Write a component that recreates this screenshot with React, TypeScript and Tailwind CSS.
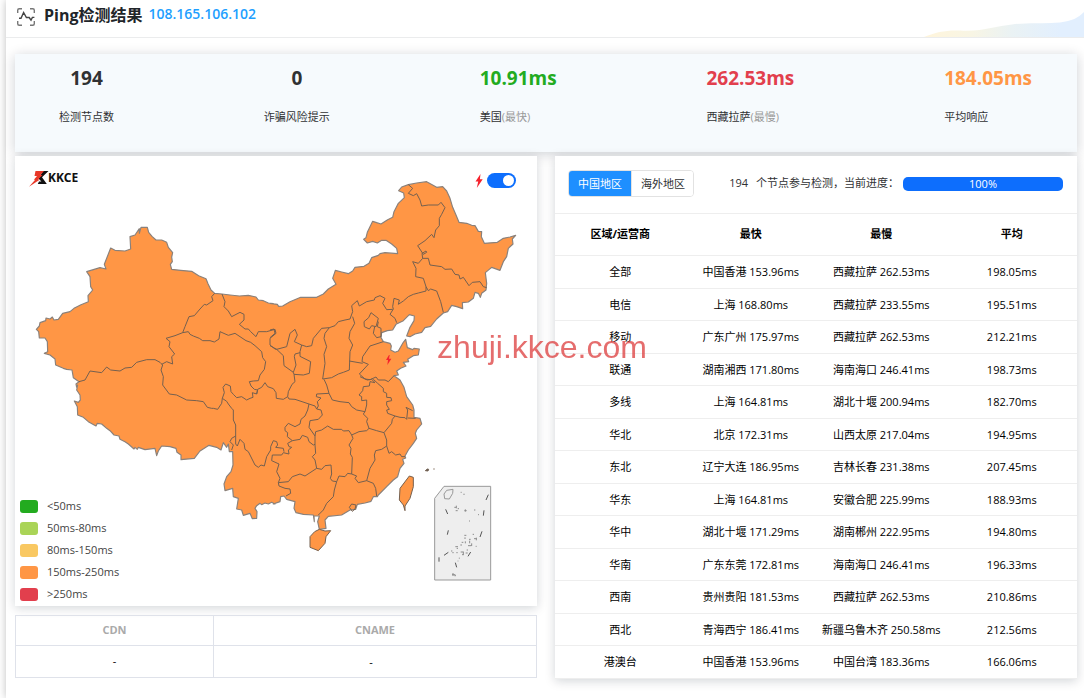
import { useState } from 'react'

const FONT = "font-['Open_Sans','Noto_Sans_CJK_SC',sans-serif]"

const legend = [
  { label: '<50ms', tone: 'bg-[#23ab1f]' },
  { label: '50ms-80ms', tone: 'bg-[#aad457]' },
  { label: '80ms-150ms', tone: 'bg-[#f9c862]' },
  { label: '150ms-250ms', tone: 'bg-[#ff9645]' },
  { label: '>250ms', tone: 'bg-[#e23f4d]' },
]

const rows = [
  ['全部', '中国香港 153.96ms', '西藏拉萨 262.53ms', '198.05ms'],
  ['电信', '上海 168.80ms', '西藏拉萨 233.55ms', '195.51ms'],
  ['移动', '广东广州 175.97ms', '西藏拉萨 262.53ms', '212.21ms'],
  ['联通', '湖南湘西 171.80ms', '海南海口 246.41ms', '198.73ms'],
  ['多线', '上海 164.81ms', '湖北十堰 200.94ms', '182.70ms'],
  ['华北', '北京 172.31ms', '山西太原 217.04ms', '194.95ms'],
  ['东北', '辽宁大连 186.95ms', '吉林长春 231.38ms', '207.45ms'],
  ['华东', '上海 164.81ms', '安徽合肥 225.99ms', '188.93ms'],
  ['华中', '湖北十堰 171.29ms', '湖南郴州 222.95ms', '194.80ms'],
  ['华南', '广东东莞 172.81ms', '海南海口 246.41ms', '196.33ms'],
  ['西南', '贵州贵阳 181.53ms', '西藏拉萨 262.53ms', '210.86ms'],
  ['西北', '青海西宁 186.41ms', '新疆乌鲁木齐 250.58ms', '212.56ms'],
  ['港澳台', '中国香港 153.96ms', '中国台湾 183.36ms', '166.06ms'],
]

// The country outline is stored clockwise in four quadrants, each with its own origin.
const outlineParts: [number, number, string][] = [
  [30, 465, '388,221 388,235 393,217 412,217 416,232 426,244 438,255 455,255 470,262 475,277 488,293 485,306 487,320 481,328 485,343 512,346 545,349 566,362 588,371 594,386 603,405 614,415 636,417 660,420 688,423 715,421 738,426 745,435 760,437 775,444 790,446'],
  [810, 465, '0,445 22,448 26,454 38,453 60,440 92,427 140,427 160,417 175,402 198,388 188,370 196,346 215,351 235,356 248,348 255,337 282,334 297,325 305,308 325,301 330,296 345,293 383,296 380,280 365,267 348,256 335,256 322,264 308,259 292,264 281,253 288,248 292,232 308,199 320,203 333,207 353,194 368,187 372,170 385,145 403,128 401,114 386,107 395,96 415,89 440,84 470,80 500,97 518,95 530,108 540,130 548,157 558,180 567,202 590,205 605,211 615,212 625,229 635,230 634,245 643,265 682,262 700,250 720,246 737,241 727,252 729,267 715,280 710,305 700,320 690,346 665,337 646,353 650,385 648,405 635,415 631,427 625,415 615,412 610,430 595,441 577,443 578,461 560,455 545,451 533,470 520,474 500,492 482,514 465,518 455,532 435,537 420,545 410,543 420,517 432,497 433,483 418,479 400,497 378,508 368,525 352,527 335,533 333,548 340,560 360,565 364,573 362,585 375,592 385,588 400,562 407,553 412,578 428,584 432,580 448,582 445,600 430,602 413,613 416,620 400,622 408,633 392,640 380,648 385,660 372,662'],
  [810, 1140, '390,0 402,22 410,50 428,75 432,90 432,112 450,115 455,132 440,150 436,160 440,175 430,190 415,210 405,228 407,234 398,238 402,250 390,265 383,290 370,300 350,320 325,345 322,350 310,350 303,364 285,369 262,373 257,388 240,390 215,405 175,409 165,420 168,445 148,448 143,425 148,408 132,408 133,425 130,405 100,403 78,398 72,385 75,365 50,358 42,348 32,350 30,365 10,372'],
  [30, 1140, '795,372 785,367 775,372 765,369 755,374 750,370 740,377 735,385 741,395 740,415 727,416 720,400 700,406 695,390 680,387 685,355 670,350 668,325 645,332 642,312 650,290 663,275 669,255 668,215 658,215 655,192 650,202 640,188 633,210 620,202 597,196 570,213 553,235 513,239 513,225 501,217 498,205 480,200 455,198 445,213 440,227 435,205 405,209 385,202 382,208 375,202 372,207 355,192 345,185 330,178 327,168 312,165 300,152 290,145 275,132 262,130 258,138 235,125 220,112 203,105 202,80 193,63 205,67 211,60 210,45 200,30 203,15'],
  [30, 465, '200,697 198,687 207,680 190,668 186,645 170,643 160,640 137,630 135,612 120,600 103,595 113,590 112,560 105,549 88,549 86,530 79,523 88,513 90,503 107,497 108,489 120,492 127,486 132,495 145,493 158,475 180,470 192,460 213,449 235,440 234,422 248,405 242,395 240,365 230,350 250,344 270,338 288,342 283,328 302,279 315,286 345,288 362,282 360,245 375,240'],
]

const outline = outlineParts
  .flatMap(([dx, dy, points]) =>
    points.split(' ').map((p) => {
      const [x, y] = p.split(',').map(Number)
      return `${x + dx},${y + dy}`
    }),
  )
  .join(' ')

const summary = [
  { value: '194', label: '检测节点数', tone: 'text-[#303133]', align: 'text-center' },
  { value: '0', label: '诈骗风险提示', tone: 'text-[#303133]', align: 'text-center' },
  { value: '10.91ms', label: '美国', note: '(最快)', tone: 'text-[#23ab1f]', align: 'text-left' },
  { value: '262.53ms', label: '西藏拉萨', note: '(最慢)', tone: 'text-[#e23f4d]', align: 'text-left' },
  { value: '184.05ms', label: '平均响应', tone: 'text-[#ff9645]', align: 'text-left' },
]

export default function App() {
  return (
    <div className={`min-h-screen bg-white pl-1.5 text-[11px] leading-4 text-[#303133] ${FONT}`}>
      <main className="min-h-screen bg-white shadow-[0_0_8px_rgba(0,0,0,0.25)]">
        <PageHeader />
        <div className="pt-4 pr-[7px] pl-[9px]">
          <Summary />
          <div className="mt-1 grid grid-cols-2 items-start gap-[18px]">
            <div>
              <MapCard />
              <CdnTable />
            </div>
            <RegionCard />
          </div>
        </div>
      </main>
      <div className="pointer-events-none fixed inset-0 flex items-center justify-center pb-1 font-['Liberation_Sans',sans-serif] text-[32px] leading-10 text-[#dc3c3c]/75">
        <span>zhuji.kkce.com</span>
      </div>
    </div>
  )
}

function PageHeader() {
  return (
    <header className="flex h-[38px] items-start justify-between border-b border-[#ebeced]">
      <div className="flex items-start pl-2.5">
        <svg viewBox="0 0 20 20" className="mt-[7px] h-5 w-5" fill="none" stroke="#444" strokeWidth="1.4">
          <path d="M1.700 6V3.200Q1.700 1.700 3.200 1.700H6M14 1.700h2.800q1.500 0 1.500 1.500V6M18.300 14v2.800q0 1.500-1.500 1.500H14M6 18.300H3.200Q1.700 18.300 1.700 16.800V14" stroke="#777" />
          <path d="M3 11.200h2L7.600 5.500l2.800 5h2.800l1.800 2.700 1.400-2.800h2" />
        </svg>
        <h1 className="ml-2 text-base leading-[30px] font-bold text-[#212529]">Ping检测结果</h1>
        <a href="#ip" className="ml-1.5 text-sm leading-7 font-semibold text-[#1e9fff]">
          108.165.106.102
        </a>
      </div>
      <svg viewBox="0 0 160 25" className="mt-3 h-[25px] w-40">
        <defs>
          <linearGradient id="wave">
            <stop offset="0" stopColor="#fff5dc" />
            <stop offset="0.3" stopColor="#f8f5e4" />
            <stop offset="0.55" stopColor="#eaf2f4" />
            <stop offset="0.85" stopColor="#e2effe" />
          </linearGradient>
        </defs>
        <path d="M0 25C12 20 22 18 36 18.500C58 20 72 14 88 12.500C104 10 120 12 136 10.500C148 9 154 6 160 0V25Z" fill="url(#wave)" />
      </svg>
    </header>
  )
}

function Summary() {
  return (
    <section className="flex h-[98px] justify-between bg-[#f6fafd] pr-[45px] pl-11 shadow-[0_2px_12px_rgba(0,20,40,0.2)]">
      {summary.map((item) => (
        <div key={item.label} className={item.align}>
          <p className={`pt-2.5 text-[19px] leading-7 font-bold ${item.tone}`}>{item.value}</p>
          <p className="mt-[17px]">
            {item.label}
            {item.note && <span className="text-[#999]">{item.note}</span>}
          </p>
        </div>
      ))}
    </section>
  )
}

function MapCard() {
  const [live, setLive] = useState(true)

  return (
    <section className="grid bg-white shadow-[0_2px_10px_rgba(0,20,40,0.18)]">
      <ChinaMap />
      <div className="col-start-1 row-start-1 flex items-start justify-between pt-3.5 pr-[21px] pl-3.5">
        <Logo />
        <label className="mt-[3px] flex items-center gap-1">
          <svg viewBox="0 0 8 14" className="h-3.5 w-2" fill="#f5222d" aria-label="实时">
            <path d="M5.500 0 0.500 7.500h2.700L1.800 14 7.700 5.300H4.900Z" />
          </svg>
          <input
            type="checkbox"
            role="switch"
            aria-label="实时"
            checked={live}
            onChange={() => setLive(!live)}
            className="flex h-[15px] w-[29px] appearance-none items-center justify-start rounded-full bg-gray-300 px-0.5 before:h-[11px] before:w-[11px] before:rounded-full before:bg-white checked:justify-end checked:bg-[#0d6efd]"
          />
        </label>
      </div>
      <ul className="col-start-1 row-start-1 flex w-40 flex-col gap-1.5 self-end pb-1 pl-[5px] text-[11px] text-[#444]">
        {legend.map((item) => (
          <li key={item.label} className="flex items-center gap-[9px]">
            <span className={`h-[13px] w-[18px] rounded-[3px] ${item.tone}`} />
            {item.label}
          </li>
        ))}
      </ul>
    </section>
  )
}

function Logo() {
  return (
    <svg viewBox="0 0 52 18" className="h-[18px] w-[52px]">
      <path d="M14 1h5.500L13 7.300l4.800 6.700h-9l1.200-2.500h2.400L9.500 8.500Z" fill="#111" />
      <path d="M6.500 1h8.500L11.500 5H13.500L9 9.500h2L0 16.800 6.200 9.800H4.800L8 6H5.500Z" fill="#e83828" />
      <text x="19" y="11.500" fontSize="12" fontWeight="700" fill="#111" fontFamily="'Noto Sans', sans-serif">
        KKCE
      </text>
    </svg>
  )
}

function ChinaMap() {
  return (
    <svg
      viewBox="45 468 1566 1350"
      className="col-start-1 row-start-1 block h-auto w-full"
      fill="none"
      stroke="#75604f"
      strokeWidth="3"
      strokeLinejoin="round"
    >
      <polygon points={outline} fill="#ff9645" stroke="#8a817b" strokeWidth="3.5" />

      {/* province borders, north-west */}
      <g transform="translate(30 465)">
        <path d="M614 415 605 425 609 437 590 450 583 448 570 462 553 482 537 485 525 515 518 533 495 542 468 550 480 560 477 575 494 597 485 605 488 627 470 620 455 628" />
        <path d="M207 680 225 675 240 648 275 653 290 636 302 645 330 648 345 639 365 637 380 622 410 614 435 614 450 622 458 630 453 645 460 665 458 690" />
        <path d="M518 533 535 530 540 538 550 543 568 550 578 557 600 557 613 561 627 552 630 530 655 541 675 535 690 545 708 557 722 562 735 572 755 590 758 608 767 620" />
        <path d="M636 417 645 440 642 455 655 468 665 485 690 472 702 478 702 495 688 508 705 522 715 522 722 530 738 545 745 530 770 530 795 523 798 535 780 550 780 570 795 582 800 583" />
      </g>

      {/* north-east */}
      <g transform="translate(810 465)">
        <path d="M415 89 428 100 415 115 430 122 440 116 450 135 455 153 475 150 505 150 513 142 525 158 515 178 508 190 508 212 497 225 492 248 485 238 465 257 443 272 460 298 470 292 468 288 456 295 458 310 475 310 480 330 515 335 525 343 545 342 555 358 567 360 570 372 580 367 597 392 607 382 630 380 640 395 650 398" />
        <path d="M458 310 445 325 428 320 438 340 437 365 460 370 468 395 468 408 445 414 430 418 415 425 400 438 385 448 388 435 372 430 368 455 370 462 360 478 375 490 380 503" />
        <path d="M468 395 475 407 482 402 500 408 512 440 520 472" />
        <path d="M368 463 350 464 338 445 345 430 330 422 315 428 313 435 290 440 268 453 262 437 245 452 248 470 240 492 225 495 205 500 195 512 178 518 155 520 130 550 125 572 110 575 95 570" />
        <path d="M178 518 165 535 162 550 170 575 162 598 165 625 158 672" />
        <path d="M248 485 254 505 240 530 237 550 248 570 240 590 238 645 220 652 205 657 185 668 158 672" />
        <path d="M282 500 296 488 303 473 325 490 318 515 305 512 298 522 283 515ZM325 500 322 515 333 520 333 545 320 548 310 535 314 515" />
        <path d="M340 560 300 573 278 605 276 620 295 628 268 657 285 672 300 674 318 666 325 675 345 675 355 680 372 662M278 625 238 618" />
        <path d="M0 525 12 522 15 535 0 548M0 572 20 583 50 575 60 535 75 523 82 540 73 560 95 570 90 590" />
        <path d="M20 583 40 602 42 632 70 652 78 630 73 605 75 597 90 593M90 604 122 620 118 655 100 660 72 658 75 680 66 688 55 710 53 725M90 590V604M70 652 72 658" />
      </g>

      {/* south-west */}
      <path d="M488 1155 508 1182 530 1185 560 1200 590 1202 610 1205 622 1222 635 1225 640 1225" />

      {/* centre and south */}
      <g transform="translate(615 990)">
        <path d="M182 95 178 118 165 135 160 152 145 153 133 155 138 168 148 178 158 180 155 192 142 188 144 202 135 205 125 210 110 200 95 203 85 193 78 185 76 168 62 162 54 172 58 188 52 205 50 220 38 238 25 235" />
        <path d="M155 192 158 178 170 172 180 158 188 170 205 176 213 188 214 205 235 208 248 200 252 207 270 208 300 218 312 222 308 240 300 258 288 268 285 282 270 290 250 280 240 292 240 302 248 308 247 320 262 332" />
        <path d="M312 222 330 228 335 237 348 240 352 255 340 268 315 272 312 292 330 318M372 190 335 192 334 200 348 204 337 215 340 228 335 237" />
        <path d="M357 148 365 165 372 190 382 210 405 215 432 218 440 230 455 240 480 245 475 252 488 265 485 275 492 295" />
        <path d="M330 318 332 305 350 300 368 288 385 298 410 298 415 303 432 302 440 315 462 305 485 302 492 295 515 302 537 308M440 315 444 325 432 345 438 355 436 372 442 382 440 432" />
        <path d="M330 318 330 345 332 370 322 380 330 390 335 415M262 332 285 328 292 316 308 322 312 335 325 345 330 343M262 332 248 340 252 350 260 352 250 360 252 372 235 368 230 375 202 375 200 392 222 402 215 425 225 445 220 458 250 455 262 440 285 432 300 438 335 415 350 418 360 407 378 405 380 432 376 445 382 453 395 455" />
        <path d="M395 455 388 480 385 500 365 520 355 540 340 555M395 455 402 438 420 440 428 430 440 432 455 438 450 445 460 458 485 452" />
        <path d="M52 205 65 214 70 222 80 235 85 240 85 270 92 285 92 318 80 325 75 335 85 345 80 360M92 318 92 342 97 348 105 328 117 340 120 358 130 365 150 405 160 412 168 405 178 408 185 380 197 360 197 350 205 332 215 335 218 345 212 352 235 355 237 365" />
        <path d="M485 452 495 415 510 390 508 375 512 362 530 358 545 348 545 330 537 308 560 280 562 268 570 258 548 250 545 240 553 238 545 225 545 215 560 212 558 203 545 202 545 190 535 185 535 175 518 160 505 148" />
        <path d="M485 452 505 460 512 475 515 498M545 348 552 370 560 365 572 375 585 372 590 380 600 380M570 258 585 262 600 263 605 268 608 240 603 232 623 242M608 264 632 265" />
        <path d="M465 140 487 150 500 148 510 158 495 155 493 168 475 170 473 182 462 195 470 200 470 212 485 210 485 225 480 245M220 458 222 468 240 475 255 477 257 490 243 498" />
      </g>

      {/* islands and the south-east coast */}
      <g transform="translate(810 1140)">
        <path d="M134 455 148 448 165 453 182 452 168 470 165 490 145 512 120 502 120 470ZM418 288 430 292 430 320 420 355 405 378 405 392 400 375 388 360 390 325Z" fill="#ff9645" />
        <path d="M238 382 245 372 258 375 255 387 247 394Z" />
        <path d="M466 272 472 267 476 268 474 273ZM490 267h4" fill="#555" />

        {/* South China Sea inset */}
        <path d="M494 355 522 319H662V600H494Z" fill="#eee" stroke="#999" strokeWidth="3" />
        <path d="M522 342 530 331 549 328 548 340 538 357 524 356Z" stroke="#999" />
        <path d="M527 388 533 402M535 451 532 464M655 344 648 360M642 391 640 407M636 454 630 471M602 516 594 529M507 532V545M556 548 560 562M522 526 535 517" stroke="#555" strokeWidth="3" />
        <path d="M553 382h5M559 377v8M563 386h4M557 392h6M572 337h3M582 341v4M583 392h7M586 388v7M612 390h4M624 404h3M597 423h3M583 466h6M585 472v5M608 463h4M597 478h5M612 476h8M619 473v8M575 487h5M586 484v6M599 482v8M571 495h5M594 497h10M605 490v8M556 500h8M560 505h4M543 513h4M547 518h4M559 518h4M572 516h8M580 515v8M587 519h6M576 524h6M590 510h4M617 499h3M568 533v3M563 543h2M546 584h10M549 579v9M553 587h5" stroke="#8c8c8c" strokeWidth="3" />
      </g>

      <path d="M1167 1065 1158 1080h6l-2 15 12-19h-7l2-11Z" fill="#f5222d" stroke="none" />
    </svg>
  )
}

function CdnTable() {
  return (
    <table className="mt-[9px] w-full border-collapse text-center">
      <thead>
        <tr className="h-[30px] text-[#aaa]">
          <th className="w-[38%] border border-[#dfe2ea] pb-0.5 font-bold">CDN</th>
          <th className="border border-[#dfe2ea] pb-0.5 font-bold">CNAME</th>
        </tr>
      </thead>
      <tbody>
        <tr className="h-8 text-black">
          <td className="border border-[#dfe2ea] pb-0.5">-</td>
          <td className="border border-[#dfe2ea] pr-2">-</td>
        </tr>
      </tbody>
    </table>
  )
}

function RegionCard() {
  const [tab, setTab] = useState<'china' | 'overseas'>('china')
  const active = 'bg-[#1e8fff] text-white'
  const idle = 'bg-white text-[#303133]'

  return (
    <section className="bg-white shadow-[0_2px_10px_rgba(0,20,40,0.18)]">
      <div className="flex h-[57px] items-start pt-3.5 pr-3.5 pl-[13px]">
        <div className="flex h-[27px] shrink-0 overflow-hidden rounded border border-[#e2e2e2]">
          <button type="button" onClick={() => setTab('china')} className={`px-[9px] ${tab === 'china' ? active : idle}`}>
            中国地区
          </button>
          <button
            type="button"
            onClick={() => setTab('overseas')}
            className={`border-l border-[#e2e2e2] pr-2 pl-[9px] ${tab === 'overseas' ? active : idle}`}
          >
            海外地区
          </button>
        </div>
        <p className="mt-[5px] ml-auto flex shrink-0 gap-2 whitespace-nowrap">
          <span>194</span>
          <span>个节点参与检测，当前进度：</span>
        </p>
        <div
          role="progressbar"
          aria-label="当前进度"
          aria-valuenow={100}
          className="mt-[7px] ml-1 h-3.5 w-40 shrink-0 overflow-hidden rounded-[5px] bg-gray-200"
        >
          <div className="h-full bg-[#0d6efd] text-center leading-[13px] text-white">100%</div>
        </div>
      </div>
      <table className="w-full table-fixed border-collapse text-center text-black">
        <thead>
          <tr className="h-[42px] border-y border-[#eee]">
            <th className="pb-0.5 font-bold">区域/运营商</th>
            <th className="pb-0.5 font-bold">最快</th>
            <th className="pb-0.5 font-bold">最慢</th>
            <th className="pb-0.5 font-bold">平均</th>
          </tr>
        </thead>
        <tbody>
          {rows.map((row) => (
            <tr key={row[0]} className="border-b border-[#eee] odd:h-[33px] even:h-8">
              {row.map((cell, i) => (
                <td key={i} className="whitespace-nowrap">
                  {cell}
                </td>
              ))}
            </tr>
          ))}
        </tbody>
      </table>
    </section>
  )
}
